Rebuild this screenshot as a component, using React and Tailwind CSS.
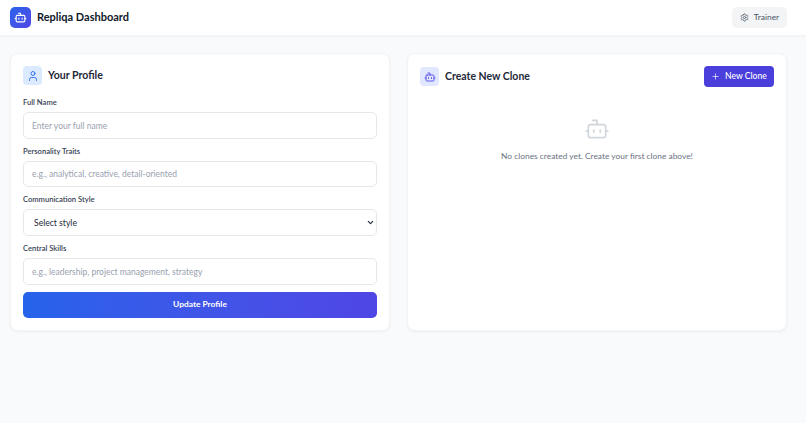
import { Bot, ChevronDown, Settings, User, Plus } from 'lucide-react';

function Field({ label, placeholder }) {
  return (
    <div>
      <label className="block text-[7.6px] leading-[10px] font-semibold text-gray-700 mb-[5px] h-[10px]">{label}</label>
      <input
        placeholder={placeholder}
        className="block w-full h-[26.5px] border border-gray-200 rounded-[5px] px-2 pt-[1px] text-[8.5px] bg-white placeholder:text-gray-400 outline-none"
      />
    </div>
  );
}

export default function App() {
  return (
    <div className="min-h-[423px] bg-[#f9fafb] font-['Lato',sans-serif] text-gray-900">
      <header className="h-[36px] bg-white border-b border-gray-100 shadow-[0_1px_2px_rgba(0,0,0,0.03)] flex items-center justify-between pl-[10px] pr-[19px]">
        <div className="flex items-center gap-[6px]">
          <div className="w-[21px] h-[21px] rounded-[5px] bg-gradient-to-br from-[#2563eb] to-[#4f46e5] flex items-center justify-center">
            <Bot size={13} className="text-white" />
          </div>
          <h1 className="text-[11px] font-bold">Repliqa Dashboard</h1>
        </div>
        <button className="w-[55px] h-[21px] bg-gray-100 rounded-[5px] flex items-center justify-center gap-[5px] text-[8.4px] text-gray-600">
          <Settings size={9} />
          Trainer
        </button>
      </header>

      <main className="grid grid-cols-2 gap-[17px] items-stretch pl-[10px] pr-[19px] pt-[17px]">
        <section className="bg-white rounded-[8px] border border-gray-100 shadow-[0_1px_3px_rgba(0,0,0,0.05)] p-[12px]">
          <div className="flex items-center gap-[6px] mb-[12px]">
            <div className="w-[19px] h-[19px] rounded-[4px] bg-[#dbeafe] flex items-center justify-center">
              <User size={12} strokeWidth={1.75} className="text-[#2563eb]" />
            </div>
            <h2 className="text-[10.6px] font-bold text-gray-800">Your Profile</h2>
          </div>
          <div className="flex flex-col gap-[7.2px]">
            <Field label="Full Name" placeholder="Enter your full name" />
            <Field label="Personality Traits" placeholder="e.g., analytical, creative, detail-oriented" />
            <div>
              <label className="block text-[7.6px] leading-[10px] font-semibold text-gray-700 mb-[5px] h-[10px]">Communication Style</label>
              <div className="relative">
                <select className="block w-full h-[26.5px] appearance-none border border-gray-200 rounded-[5px] px-[10px] pt-[2px] text-[8.6px] bg-white text-gray-800 outline-none">
                  <option>Select style</option>
                </select>
                <ChevronDown size={9} strokeWidth={3} className="absolute right-[2.5px] top-[9px] text-gray-800" />
              </div>
            </div>
            <Field label="Central Skills" placeholder="e.g., leadership, project management, strategy" />
            <button className="h-[26px] rounded-[5px] bg-gradient-to-r from-[#2563eb] to-[#4f46e5] text-white text-[8.4px] font-bold">
              Update Profile
            </button>
          </div>
        </section>

        <section className="bg-white rounded-[8px] border border-gray-100 shadow-[0_1px_3px_rgba(0,0,0,0.05)] px-[12px] pt-[12px]">
          <div className="flex items-center justify-between">
            <div className="flex items-center gap-[6px]">
              <div className="w-[19px] h-[19px] rounded-[4px] bg-[#e0e7ff] flex items-center justify-center">
                <Bot size={12} strokeWidth={1.75} className="text-[#4f46e5]" />
              </div>
              <h2 className="text-[10.5px] font-bold text-gray-800">Create New Clone</h2>
            </div>
            <button className="w-[70px] h-[21px] rounded-[4px] bg-[#4a3fdb] text-white text-[8.6px] font-medium flex items-center justify-center gap-[5px]">
              <Plus size={9} strokeWidth={1.75} />
              New Clone
            </button>
          </div>
          <div className="flex flex-col items-center pt-[29px]">
            <Bot size={26} strokeWidth={1.5} className="text-gray-300" />
            <p className="mt-[8px] text-[8.4px] text-gray-500">No clones created yet. Create your first clone above!</p>
          </div>
        </section>
      </main>
    </div>
  );
}
